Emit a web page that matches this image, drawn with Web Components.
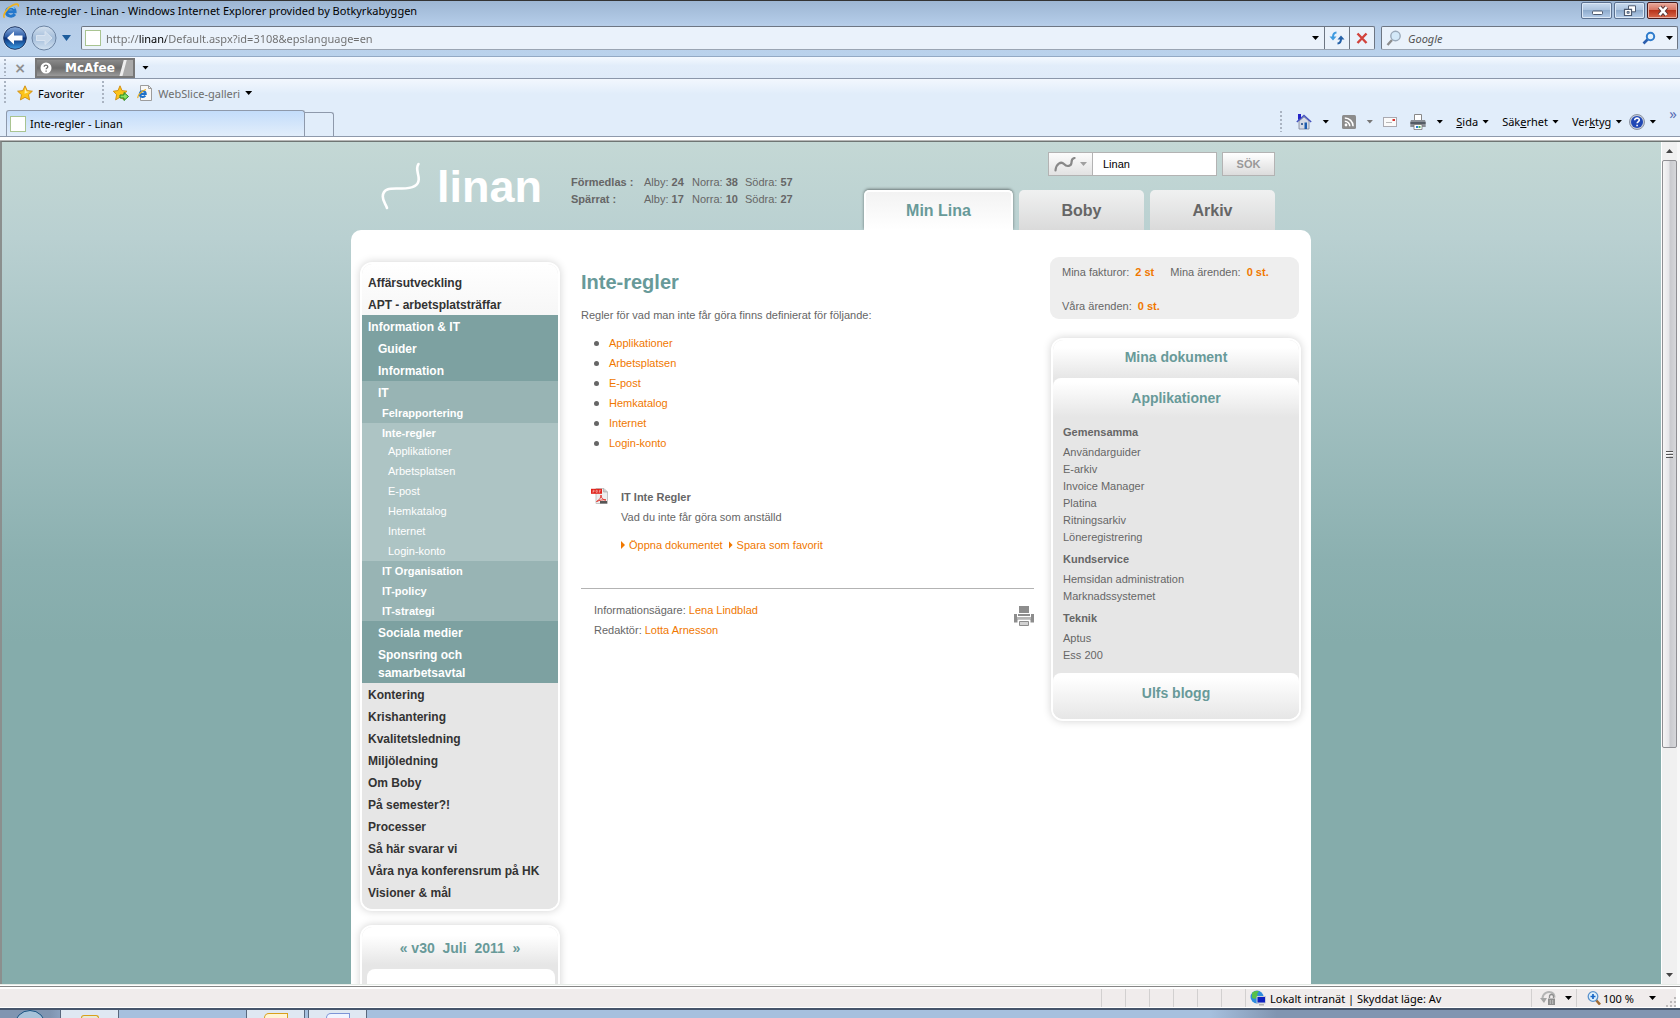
<!DOCTYPE html>
<html lang="sv">
<head>
<meta charset="utf-8">
<title>Inte-regler - Linan</title>
<style>
html,body{margin:0;height:100%}
body{font-family:"Liberation Sans",Arial,sans-serif;font-size:11px;color:#666;background:#fff;overflow:hidden}
</style>
</head>
<body>
<browser-window></browser-window>
<script>
const ICONS = {
  ie: '<svg viewBox="0 0 16 16"><path d="M3.500 8.800h8.600c0-5-7.700-5.200-8.600-.6-.8 5 5.600 6.600 8.400 2.800" fill="none" stroke="#2478cc" stroke-width="3"/><path d="M3.800 7c1.200-3.300 5.800-4 7.600-1.200" fill="none" stroke="#8fd4fb" stroke-width="1.200"/><path d="M1.500 14.800C-.8 12.500 4 4.500 10 2c3-1.300 6-1.500 5.200 1.500" fill="none" stroke="#f0b21c" stroke-width="1.600"/></svg>',
  back: '<svg viewBox="0 0 26 26"><defs><linearGradient id="b" x2="0" y2="1"><stop offset="0" stop-color="#8fb0dd"/><stop offset=".45" stop-color="#2a5aa5"/><stop offset=".5" stop-color="#0a2f78"/><stop offset="1" stop-color="#3ea0e8"/></linearGradient></defs><circle cx="13" cy="13" r="12.300" fill="#d3e1f1"/><circle cx="13" cy="13" r="11.300" fill="url(#b)" stroke="#1d3664" stroke-width="1"/><path d="M5 13l7-6.500v4h8.500v5H12v4z" fill="#fff"/></svg>',
  fwd: '<svg viewBox="0 0 26 26"><defs><linearGradient id="f" x2="0" y2="1"><stop offset="0" stop-color="#d5e2f0"/><stop offset=".5" stop-color="#a3bdda"/><stop offset="1" stop-color="#d4e3f2"/></linearGradient></defs><circle cx="13" cy="13" r="12" fill="url(#f)" stroke="#6c84a3"/><path d="M21 13l-7-6.500v4H5.500v5H14v4z" fill="#c9d9ea" stroke="#dfe9f4" stroke-width=".8"/></svg>',
  refresh: '<svg viewBox="0 0 16 16"><path d="M7.500 2.500C4.500 2.700 4 4.500 4 7" fill="none" stroke="#3f9be0" stroke-width="2"/><path d="M.5 6.500h7L4 10.500z" fill="#3f9be0"/><path d="M8.500 13.500c3-.2 3.500-2 3.500-4.500" fill="none" stroke="#2461a8" stroke-width="2"/><path d="M8.500 9.500h7L12 5.500z" fill="#2461a8"/></svg>',
  stop: '<svg viewBox="0 0 16 16"><path d="M3.500 3.500l9 9.500M12.500 3.500l-9 9.500" stroke="#d2433c" stroke-width="2.400"/></svg>',
  glass: '<svg viewBox="0 0 16 16"><path d="M6 10l-4.500 5" stroke="#8d8d8d" stroke-width="2.400"/><circle cx="9.500" cy="6" r="4.700" fill="#d4e9f9" stroke="#9aa9ba" stroke-width="1.400"/></svg>',
  go: '<svg viewBox="0 0 14 14"><path d="M6 8l-4.500 4.500" stroke="#2b5fae" stroke-width="2.600"/><circle cx="8.500" cy="5.500" r="3.700" fill="#e4f2fd" stroke="#2f7ccc" stroke-width="2"/></svg>',
  star: '<svg viewBox="0 0 16 16"><path d="M8 .8l2.200 4.800 5.200.6-3.900 3.500 1.100 5.200L8 12.300l-4.600 2.600 1.100-5.200L.6 6.200l5.200-.6z" fill="#fcc419" stroke="#cf8a10" stroke-width=".9"/><path d="M8 3l1.500 3.400 3 .4-5 2z" fill="#fff0a8"/></svg>',
  staradd: '<svg viewBox="0 0 16 16"><path d="M7 .8l2 4.800 5 .6-3.600 3.500 1 5.200L7 12.300l-4.400 2.600 1-5.200L.3 6.200l4.700-.6z" fill="#fcc419" stroke="#cf8a10" stroke-width=".9"/><path d="M7 10h4V7.500l4.500 4-4.500 4V13H7z" fill="#8be060" stroke="#238a24" stroke-width="1"/></svg>',
  slice: '<svg viewBox="0 0 16 16"><path d="M3.500.5h8l3 3v12h-11z" fill="#f7f7f7" stroke="#9c9c9c"/><path d="M11.500.5v3h3" fill="none" stroke="#9c9c9c"/><path d="M2.500 9h6.200c0-3.500-5.200-3.600-5.800-.4-.5 3.400 3.600 4.400 5.400 2" fill="none" stroke="#1f70c8" stroke-width="2.100"/><path d="M1 13c-1-2 3-7 8-8.500" fill="none" stroke="#edb120" stroke-width="1.200"/></svg>',
  home: '<svg viewBox="0 0 16 16"><path d="M3 7v8h10V7L8 3z" fill="#d6dbe6" stroke="#7b8397" stroke-width=".8"/><path d="M.8 8L8 1.500 15.200 8" fill="none" stroke="#4553bd" stroke-width="1.500"/><path d="M2 0h3v4L2 6z" fill="#2323c8"/><path d="M8.500 8.500H11V15H8.500z" fill="#1d5cae"/><path d="M5 9h2v2H5z" fill="#4a6c9e"/></svg>',
  rss: '<svg viewBox="0 0 14 14"><rect width="14" height="14" rx="1.500" fill="#8c8c8c"/><circle cx="4" cy="10" r="1.400" fill="#fff"/><path d="M2.800 6.200a5 5 0 015 5M2.800 3a8.300 8.300 0 018.300 8.200" fill="none" stroke="#fff" stroke-width="1.500"/></svg>',
  mail: '<svg viewBox="0 0 14 10"><rect x=".5" y=".5" width="13" height="9" fill="#fafafa" stroke="#a9a9b0"/><path d="M9.500 2h2.500v2H9.500z" fill="#d8342e"/><path d="M3 5.500h6" stroke="#b9b9b9"/></svg>',
  print: '<svg viewBox="0 0 16 16"><path d="M4.500.5h7V7h-7z" fill="#fff" stroke="#888"/><path d="M1 6h14l.7 2v5H.3V8z" fill="#8a8f96"/><path d="M.5 8h15v2H.5z" fill="#555c66"/><path d="M4 10.500h8v5H4z" fill="#fff" stroke="#777" stroke-width=".8"/><path d="M6 12h2v2H6z" fill="#2b7bd0"/><path d="M8.500 12h2v2h-2z" fill="#48b157"/></svg>',
  help: '<svg viewBox="0 0 16 16"><circle cx="8" cy="8" r="7.500" fill="#c3cbd9" stroke="#8b93a3"/><circle cx="8" cy="8" r="6" fill="#1f47b5"/><path d="M5.700 6.300c0-3 4.800-2.700 4.600-.2-.1 1.400-2.100 1.500-2.200 3.200M8.100 10.700v1.500" fill="none" stroke="#fff" stroke-width="1.600"/></svg>',
  globe: '<svg viewBox="0 0 16 16"><circle cx="7" cy="7" r="6.500" fill="#2f8bdd"/><path d="M2 3c2-2 5-2.500 7-1.500L7 4l1 2-3 3-3-1z" fill="#58c04a"/><path d="M7 6.500h8.500V13H7z" fill="#0f20c0" stroke="#c8ccd4"/><path d="M9 14h5v1.500H9z" fill="#b0b0b0"/></svg>',
  lock: '<svg viewBox="0 0 16 16"><path d="M2.500 8C3 3 8 1 11.500 2.500c2 1 3 2.500 3 5" fill="none" stroke="#b5b5b5" stroke-width="2"/><path d="M0 8l4 5 3-5z" fill="#a5a5a5"/><path d="M8 8.500h7V15H8z" fill="#8f8f8f"/><path d="M9.500 8V6.500a2 2 0 014 0V8" fill="none" stroke="#8f8f8f" stroke-width="1.300"/><path d="M10.300 10v4M12.700 10v4" stroke="#ccc" stroke-width=".8"/></svg>',
  zoom: '<svg viewBox="0 0 14 14"><path d="M9 9l4 4.500" stroke="#a06a32" stroke-width="2.600"/><circle cx="6" cy="5.500" r="4.800" fill="#dff0fc" stroke="#5a92cc" stroke-width="1.300"/><path d="M3.500 5.500h5M6 3v5" stroke="#1867c6" stroke-width="1.700"/></svg>',
  pdf: '<svg viewBox="0 0 17 16"><path d="M5 .5h8l3.500 3.500v11.500H5z" fill="#eee" stroke="#c4c4c4"/><path d="M12.500.5V4h4" fill="#ccc" stroke="#aaa" stroke-width=".7"/><path d="M0 .8h11v5H0z" fill="#e0231b"/><path d="M2 4.800V2.300h1.200v1.200H2M5 2.300v2h1.300v-2zM8.300 4.800V2.300h1.500M8.300 3.600h1" fill="none" stroke="#f6b5b0" stroke-width=".7"/><path d="M5.500 13.500c3-1.500 4.500-4 4.500-6.500 0 3 2 5 5 5-3-.5-6 0-9.500 1.500z" fill="none" stroke="#e02d25" stroke-width=".9"/><path d="M9 13h7v2.500H9z" fill="#555"/></svg>',
  printpage: '<svg viewBox="0 0 20 20"><path d="M5 0h10v7H5z" fill="#8d8d8d"/><path d="M0 8h3v3h14V8h3v8.500h-3.500v-3h-13v3H0z" fill="#8d8d8d"/><path d="M4 8h12v2H4z" fill="#8d8d8d"/><path d="M3 12h14" stroke="#b5b5b5" stroke-width="2"/><path d="M5.500 15.500h9v4h-9z" fill="#d2d2d2" stroke="#8d8d8d"/></svg>',
  line: '<svg viewBox="0 0 40 48"><path d="M37.500 2c-3.500 5 .5 9.500.2 15.500C37.400 25 29 26.500 21 26.500c-8 .5-19-2-19.200 8C1.700 39 4.500 41.500 6 46" fill="none" stroke="#fff" stroke-width="2.600" stroke-linecap="round"/></svg>',
  curve: '<svg viewBox="0 0 22 15"><path d="M1.500 13.500C2 7 7 4 10 7c3 3.500 7.500 2 7.500-1.500C17.500 3 18 1.500 20.500 1" fill="none" stroke="#888" stroke-width="2.200" stroke-linecap="round"/></svg>',
  min: '<svg viewBox="0 0 18 12"><rect x="4.500" y="6" width="10" height="3.500" rx="1" fill="#fff" stroke="#4d5a70"/></svg>',
  restore: '<svg viewBox="0 0 18 12"><path d="M7.500.8h7v6h-7z" fill="#fff" stroke="#4d5a70"/><path d="M3.500 4.300h7v6.200h-7z" fill="#fff" stroke="#4d5a70" stroke-width="1.200"/><path d="M6 6.500h2.200v1.800H6z" fill="#8fa9cb" stroke="#4d5a70" stroke-width=".8"/></svg>',
  close: '<svg viewBox="0 0 18 12"><path d="M5.500 2l7 8M12.500 2l-7 8" stroke="#5b3a3a" stroke-width="4.500"/><path d="M5.500 2l7 8M12.500 2l-7 8" stroke="#fff" stroke-width="2.600"/></svg>',
  query: '<svg viewBox="0 0 12 12"><circle cx="6" cy="6" r="5.500" fill="#fff"/><path d="M4.200 4.700c0-2.200 3.600-2 3.600.1C7.800 6 6.100 6 6.100 7.300M6.100 8.500v1.300" fill="none" stroke="#6e6e6e" stroke-width="1.300"/></svg>',
  size: '<svg viewBox="0 0 10 10"><path d="M8 0h2v2H8zM8 4h2v2H8zM4 4h2v2H4zM8 8h2v2H8zM4 8h2v2H4zM0 8h2v2H0z" fill="#bdbaba"/></svg>'
};

const RESET = `
*{box-sizing:border-box}
button,input{font:inherit;color:inherit;margin:0;padding:0;border:0;background:none;outline:0}
a{color:inherit;text-decoration:none}
ul{list-style:none;margin:0;padding:0}
p,h1,h2,h3{margin:0}
`;

function define(name, css, html, setup) {
  customElements.define(name, class extends HTMLElement {
    constructor() {
      super();
      const root = this.attachShadow({mode: 'open'});
      const t = document.createElement('template');
      t.innerHTML = `<style>${RESET}${css}</style>${html}`;
      root.append(t.content.cloneNode(true));
    }
    connectedCallback() { if (setup) setup(this, this.shadowRoot); }
  });
}

/* Small shared parts */
define('ui-icon', ':host{display:block;flex:none}svg{display:block;width:100%;height:100%}span{display:contents}', '<span></span>',
  (el, root) => {
    const s = Number(el.getAttribute('size') || 16);
    el.style.width = s + 'px';
    el.style.height = (el.getAttribute('tall') || s) + 'px';
    root.querySelector('span').innerHTML = ICONS[el.getAttribute('name')];
  });
define('drop-arrow', ':host{display:block;flex:none;width:7px;height:4px;background:var(--arrow,#000);clip-path:polygon(0 0,100% 0,50% 100%)}', '');
define('tool-grip', ':host{display:block;flex:none;width:2px;align-self:stretch;margin:2px 0;background:repeating-linear-gradient(#aab4c2 0 2px,transparent 2px 4px)}', '');

/* Browser chrome */
define('title-bar', `
:host{display:flex;align-items:center;height:24px;border-top:1px solid #333;padding:0 2px 4px 3px;gap:7px;color:#000;background:linear-gradient(#9db6d3,#b4cce8)}
.name{flex:1;white-space:nowrap}
.win{display:flex;gap:2px;align-self:flex-start;padding-top:1px}
.win button{width:31px;height:17px;display:grid;place-items:center;border:1px solid #5c7190;border-radius:2px;background:linear-gradient(#c9dbef,#a9c1dd 50%,#8faccd 50%,#b5cdea);box-shadow:inset 0 0 0 1px #dbe8f6}
.win .x{border-color:#471a1c;background:linear-gradient(#e9a99b,#d6705d 50%,#b8341c 50%,#d8694c);box-shadow:inset 0 0 0 1px #e9b0a3}
`, `<ui-icon name="ie"></ui-icon><span class="name">Inte-regler - Linan - Windows Internet Explorer provided by Botkyrkabyggen</span>
<div class="win"><button aria-label="Minimera"><ui-icon name="min" size="18" tall="12"></ui-icon></button><button aria-label="Återställ"><ui-icon name="restore" size="18" tall="12"></ui-icon></button><button class="x" aria-label="Stäng"><ui-icon name="close" size="18" tall="12"></ui-icon></button></div>`);

define('address-bar', `
:host{display:flex;align-items:flex-start;height:33px;padding:1px 2px 0 2px;background:linear-gradient(#b6cde8,#bad2ec);border-bottom:1px solid #93a9c4}
.nav{display:flex;align-items:center;gap:3px;padding-right:10px;height:26px}
.nav drop-arrow{width:9px;height:6px;margin-left:2px;--arrow:#1c5c9c}
.box{display:flex;align-items:stretch;height:24px;margin-top:1px;background:#eaf2fb;border:1px solid #6d7683;border-bottom-color:#9aa5b3;border-radius:2px}
.addr{flex:1;min-width:0;margin-right:6px}
.find{width:297px;align-items:center;padding:0 4px;gap:6px;font-style:italic;color:#555}
.find input{flex:1;min-width:0}
.find input::placeholder{color:#555;opacity:1}
.find drop-arrow{margin-left:4px}
.page{align-self:center;width:16px;height:16px;margin:0 5px 0 3px;background:#fff;border:1px solid #a9c491}
#url{flex:1;min-width:0;color:#6d6d6d;-webkit-text-fill-color:transparent;background:linear-gradient(90deg,#6d6d6d 33px,#000 33px 60px,#6d6d6d 60px);-webkit-background-clip:text;background-clip:text}
.more{padding:0 5px;display:grid;place-items:center}
.cell{width:25px;display:grid;place-items:center;border-left:1px solid #6d7683}
`, `<div class="nav"><button aria-label="Bakåt"><ui-icon name="back" size="26"></ui-icon></button><button aria-label="Framåt"><ui-icon name="fwd" size="26"></ui-icon></button><drop-arrow></drop-arrow></div>
<div class="box addr"><i class="page"></i><input id="url" aria-label="Adress" value="http://linan/Default.aspx?id=3108&amp;epslanguage=en"><button class="more" aria-label="Visa adresser"><drop-arrow></drop-arrow></button><button class="cell" aria-label="Uppdatera"><ui-icon name="refresh"></ui-icon></button><button class="cell" aria-label="Stoppa"><ui-icon name="stop"></ui-icon></button></div>
<div class="box find"><ui-icon name="glass"></ui-icon><input aria-label="Sök på webben" placeholder="Google"><button aria-label="Sök"><ui-icon name="go" size="14"></ui-icon></button><drop-arrow></drop-arrow></div>`);

define('mcafee-bar', `
:host{display:flex;align-items:center;height:22px;padding:0 4px;background:linear-gradient(#f4f9ff,#e2edfa 40%,#dfebf9);border-bottom:1px solid #8b97aa}
.x{width:16px;margin:0 7px 0 6px;font:bold 14px/16px "DejaVu Sans",sans-serif;color:#8f8f8f}
.brand{display:flex;align-items:center;gap:13px;width:100px;height:20px;padding-left:3px;margin-right:7px;border:2px solid #777;color:#fff;background:linear-gradient(105deg,transparent 86%,#eee 87% 89%,#aaa 90%),linear-gradient(#8a8a8a,#6c6c6c 50%,#9a9a9a)}
.brand span{font:bold 12px/14px "DejaVu Sans",sans-serif}
`, `<tool-grip></tool-grip><button class="x" aria-label="Stäng verktygsfält">×</button><button class="brand"><ui-icon name="query" size="12"></ui-icon><span>McAfee</span></button><drop-arrow></drop-arrow>`);

define('favorites-bar', `
:host{display:flex;align-items:center;height:30px;padding:0 4px 2px;color:#000;background:linear-gradient(#f2f7fe,#e1edfa 50%)}
button{display:flex;align-items:center;white-space:nowrap}
.fav{gap:5px;margin:0 18px 0 11px}
.add{margin:0 8px 0 9px}
.web{gap:5px;color:#6d6d6d}
`, `<tool-grip></tool-grip><button class="fav"><ui-icon name="star"></ui-icon>Favoriter</button><tool-grip></tool-grip><button class="add" aria-label="Lägg till"><ui-icon name="staradd"></ui-icon></button><button class="web"><ui-icon name="slice"></ui-icon>WebSlice-galleri<drop-arrow></drop-arrow></button>`);

define('tab-row', `
:host{display:flex;align-items:flex-end;height:28px;padding-left:6px;color:#000;background:#e1edfa;border-bottom:1px solid #8e99ab}
.tab{display:flex;align-items:center;gap:4px;width:299px;height:26px;padding-left:3px;border:1px solid #8e99ab;border-bottom:0;border-radius:3px 3px 0 0;background:linear-gradient(#c3dcfa,#e2eefb)}
.tab i{width:16px;height:16px;background:#fff;border:1px solid #a9c491}
.new{width:29px;height:24px;border:1px solid #8e99ab;border-left:0;border-bottom:0;border-radius:0 3px 0 0}
.tools{display:flex;align-items:center;gap:1px;align-self:stretch;margin-left:auto;padding:0 3px 2px 0}
.tools button{display:flex;align-items:center;gap:4px;padding:0 6px;white-space:nowrap}
.tools button.pic{gap:10px}
.tools button.home{padding-left:13px}
.tools button.post{padding-left:3px}
.tools button.last{padding:0}
.off{--arrow:#777}
.chev{align-self:flex-start;margin-left:12px;color:#5b6fb5;font-size:15px;line-height:9px}
`, `<button class="tab"><i></i>Inte-regler - Linan</button><button class="new" aria-label="Ny flik"></button>
<div class="tools"><tool-grip></tool-grip>
<button class="pic home" aria-label="Start"><ui-icon name="home"></ui-icon><drop-arrow></drop-arrow></button>
<button class="pic off" aria-label="Feeds"><ui-icon name="rss" size="14"></ui-icon><drop-arrow></drop-arrow></button>
<button class="post" aria-label="E-post"><ui-icon name="mail" size="14" tall="10"></ui-icon></button>
<button class="pic" aria-label="Skriv ut"><ui-icon name="print"></ui-icon><drop-arrow></drop-arrow></button>
<button><span><u>S</u>ida</span><drop-arrow></drop-arrow></button>
<button><span>Säk<u>e</u>rhet</span><drop-arrow></drop-arrow></button>
<button><span>Ver<u>k</u>tyg</span><drop-arrow></drop-arrow></button>
<button class="last" aria-label="Hjälp"><ui-icon name="help"></ui-icon><drop-arrow></drop-arrow></button>
<span class="chev">»</span></div>`);

define('scroll-bar', `
:host{display:flex;flex-direction:column;align-items:center;width:19px;flex:none;background:#f0f0f0;border-left:1px solid #fff;border-right:3px solid #f8f8f8}
drop-arrow{--arrow:#444;margin:7px 0}
.up{clip-path:polygon(50% 0,100% 100%,0 100%)}
.track{flex:1;width:100%;display:flex;flex-direction:column}
.thumb{flex:0 0 73%;display:grid;place-items:center;border:1px solid #8f8f93;border-radius:2px;background:linear-gradient(90deg,#f6f6f6,#e6e6e9 45%,#c9cace 55%,#d6d7da)}
.thumb i{width:7px;height:7px;background:repeating-linear-gradient(#555 0 1px,#fafafa 1px 2px,transparent 2px 3px)}
`, `<drop-arrow class="up"></drop-arrow><div class="track"><div class="thumb"><i></i></div></div><drop-arrow></drop-arrow>`);

define('status-bar', `
:host{display:block;color:#000}
.bar{display:flex;align-items:stretch;height:24px;border-top:1px solid #e5ebe6;box-shadow:inset 0 1px #fff,inset 0 2px #868686,inset 0 4px #fff;padding:4px 4px 1px 0;background:#f0ecec content-box}
.bar>*{border-left:1px solid #d2d0d0;display:flex;align-items:center;white-space:nowrap}
.fill{flex:1;border:0}
.cell{width:24px}
.zone{width:286px;gap:4px;padding-left:4px}
.lock{width:45px;gap:9px;padding-left:8px}
.zoom{width:80px;gap:2px;padding-left:10px}
.zoom drop-arrow{margin-left:auto}
.bar .size{width:20px;border:0;align-items:flex-end;justify-content:flex-end}
.task{display:flex;height:10px;border-top:2px solid #46556b;background:linear-gradient(90deg,#8095b1 3%,#a6c0de 5% 72%,#8195b1 76%)}
.orb{width:60px;display:flex;justify-content:center;overflow:hidden}
.orb i{flex:none;width:32px;height:32px;border-radius:50%;border:1px solid #155080;background:#a7c2d9}
.app{width:59px;background:#dfe8f2;border:1px solid #59687d;border-width:0 1px;display:flex;justify-content:center;align-items:flex-end}
.app i{width:24px;height:5px;border:1px solid #d9a01b;border-bottom:0;border-radius:8px 0 0;background:#fff4d4}
.app.w i{border-color:#7d94d6;background:#f0f4ff}
.app.f i{width:18px;height:3px;border-radius:8px 8px 0 0;background:#e6e9d8}
.gap{flex:0 0 127px}.gap.s{flex-basis:3px}
`, `<div class="bar"><span class="fill"></span><span class="cell"></span><span class="cell"></span><span class="cell"></span><span class="cell"></span><span class="cell"></span><span class="cell"></span>
<div class="zone"><ui-icon name="globe"></ui-icon>Lokalt intranät | Skyddat läge: Av</div>
<button class="lock" aria-label="Skyddat läge"><ui-icon name="lock"></ui-icon><drop-arrow></drop-arrow></button>
<button class="zoom"><ui-icon name="zoom" size="14"></ui-icon>100 %<drop-arrow></drop-arrow></button><span class="size"><ui-icon name="size" size="10"></ui-icon></span></div>
<div class="task"><span class="orb"><i></i></span><span class="app f"><i></i></span><span class="gap"></span><span class="app"><i></i></span><span class="gap s"></span><span class="app w"><i></i></span></div>`);

/* Intranet page */
define('site-header', `
:host{display:flex;height:88px;padding:0 36px 0 30px}
.logo{display:flex;gap:16px;width:190px;padding-top:20px;color:#fff;font:bold 45px/50px "Liberation Sans",Arial,sans-serif}
.stats{display:grid;grid-template-columns:73px 48px 53px auto;align-content:start;padding-top:32px;line-height:17px;white-space:nowrap}
.right{margin-left:auto;display:flex;flex-direction:column;justify-content:space-between;align-items:flex-end;padding-top:10px}
form{display:flex;gap:5px;height:24px}
.field{display:flex;border:1px solid #b3b3b3;background:#fff}
.pick{display:flex;align-items:center;justify-content:center;gap:4px;width:44px;border-right:1px solid #b3b3b3;background:linear-gradient(#fcfcfc,#e2e2e2);--arrow:#a0a0a0}
.field input{width:123px;padding:0 10px;color:#000}
.go{width:53px;border:1px solid #b3b3b3;background:linear-gradient(#fff,#dcdcdc);color:#999;font-weight:bold}
nav{display:flex;align-items:flex-end;gap:6px;font:bold 16px/42px "Liberation Sans",Arial,sans-serif}
nav a{width:125px;height:40px;text-align:center;border-radius:5px 5px 0 0;background:linear-gradient(#f0f1f1,#dadada);color:#666}
nav a.on{width:149px;border:2px solid #fff;border-bottom:0;background:linear-gradient(#f3f3f3,#fff);line-height:38px;color:#689a99;box-shadow:0 -1px 3px rgba(0,0,0,.45);clip-path:inset(-5px -5px 0 -5px)}
`, `<div class="logo"><ui-icon name="line" size="40" tall="48"></ui-icon><span>linan</span></div>
<div class="stats"><b>Förmedlas :</b><span>Alby: <b>24</b></span><span>Norra: <b>38</b></span><span>Södra: <b>57</b></span>
<b>Spärrat :</b><span>Alby: <b>17</b></span><span>Norra: <b>10</b></span><span>Södra: <b>27</b></span></div>
<div class="right"><form><div class="field"><button type="button" class="pick" aria-label="Välj sökområde"><ui-icon name="curve" size="22" tall="15"></ui-icon><drop-arrow></drop-arrow></button><input aria-label="Sök" value="Linan"></div><button type="button" class="go">SÖK</button></form>
<nav><a class="on" href="#">Min Lina</a><a href="#">Boby</a><a href="#">Arkiv</a></nav></div>`);

define('soft-card', `
:host{display:block;border:2px solid #fff;border-radius:12px;overflow:hidden;box-shadow:0 0 8px rgba(0,0,0,.18);background:#e6e6e6}
`, '<slot></slot>');

define('side-menu', `
:host{display:block}
nav{padding:7px 0 6px;background:linear-gradient(#fff,#e6e6e6 150px);font-weight:bold;font-size:12px;line-height:18px;color:#333}
a{display:block;padding:3px 6px 1px}
.l1 a{padding-left:16px}
.open,.open .l1{background:#7da1a1;color:#fff}
.l1 .open{background:#98b4b4}
.l2 .open{background:#adc4c4}
.l2{font-size:11px;line-height:20px}
.l2 a{padding:0 20px}
.l3{font-weight:normal;margin-top:-2px}
.l3 a{padding:0 26px}
`, '<nav></nav>', (el, root) => {
  const tree = ['Affärsutveckling', 'APT - arbetsplatsträffar',
    ['Information & IT', 'Guider', 'Information',
      ['IT', 'Felrapportering',
        ['Inte-regler', 'Applikationer', 'Arbetsplatsen', 'E-post', 'Hemkatalog', 'Internet', 'Login-konto'],
        'IT Organisation', 'IT-policy', 'IT-strategi'],
      'Sociala medier', 'Sponsring och\nsamarbetsavtal'],
    'Kontering', 'Krishantering', 'Kvalitetsledning', 'Miljöledning', 'Om Boby', 'På semester?!',
    'Processer', 'Så här svarar vi', 'Våra nya konferensrum på HK', 'Visioner & mål'];
  const esc = s => s.replace(/&/g, '&amp;').replace('\n', '<br>');
  const list = (items, depth) => `<ul class="l${depth}">` + items.map(i => Array.isArray(i)
    ? `<li class="open"><a href="#">${esc(i[0])}</a>${list(i.slice(1), depth + 1)}</li>`
    : `<li><a href="#">${esc(i)}</a></li>`).join('') + '</ul>';
  root.querySelector('nav').innerHTML = list(tree, 0);
});

define('mini-calendar', `
:host{display:block}
div{padding:12px 0;height:42px;text-align:center;font:bold 14px/18px "Liberation Sans",Arial,sans-serif;color:#689a99;background:linear-gradient(#fff 20%,#e6e6e6 90%);white-space:pre}
section{height:150px;margin:0 3px 0 5px;border-radius:8px;background:#fff}
`, '<div><a href="#">«</a> v30  Juli  2011  <a href="#">»</a></div><section></section>');

define('page-article', `
:host{display:block;padding:9px 16px 0 21px;line-height:20px}
h1{font-size:20px;line-height:32px;color:#689a99}
a{color:#f07800}
.intro{margin-top:7px}
.list{margin-top:8px}
.list li{display:flex;align-items:center;padding-left:13px;gap:10px}
.list li::before{content:"";width:5px;height:5px;border-radius:50%;background:#666}
.doc{display:flex;gap:13px;margin-top:34px;padding-left:10px}
.doc ui-icon{margin-top:1px}
.acts{display:flex;gap:6px;margin-top:8px}
.acts a{display:flex;align-items:center;gap:4px}
.acts a::before{content:"";width:4px;height:8px;background:#f07800;clip-path:polygon(0 0,100% 50%,0 100%)}
footer{display:flex;justify-content:space-between;margin-top:33px;padding:11px 0 0 13px;border-top:1px solid #b3b3b3}
footer button{align-self:flex-start;padding-top:6px}
`, `<h1>Inte-regler</h1><p class="intro">Regler för vad man inte får göra finns definierat för följande:</p>
<ul class="list"><li><a href="#">Applikationer</a></li><li><a href="#">Arbetsplatsen</a></li><li><a href="#">E-post</a></li><li><a href="#">Hemkatalog</a></li><li><a href="#">Internet</a></li><li><a href="#">Login-konto</a></li></ul>
<div class="doc"><ui-icon name="pdf" size="17" tall="16"></ui-icon><div><b>IT Inte Regler</b><p>Vad du inte får göra som anställd</p><div class="acts"><a href="#">Öppna dokumentet</a><a href="#">Spara som favorit</a></div></div></div>
<footer><div><p>Informationsägare: <a href="#">Lena Lindblad</a></p><p>Redaktör: <a href="#">Lotta Arnesson</a></p></div><button aria-label="Skriv ut"><ui-icon name="printpage" size="20"></ui-icon></button></footer>`);

define('my-numbers', `
:host{display:flex;flex-wrap:wrap;gap:17px 16px;margin-right:2px;padding:7px 12px 4px;border-radius:9px;background:#eee;line-height:17px}
b{color:#f07800;padding-left:3px}
`, '<span>Mina fakturor: <b>2 st</b></span><span>Mina ärenden: <b>0 st.</b></span><span>Våra ärenden: <b>0 st.</b></span>');

define('side-panels', `
:host{display:block}
h2{font-size:14px;line-height:18px;text-align:center;color:#689a99;padding:11px 0 10px;border-radius:8px 8px 0 0;background:linear-gradient(#fff 10%,#e6e6e6)}
h2.first{padding:8px 0 12px;background:linear-gradient(#fff 20%,#e6e6e6)}
h2.last{padding-bottom:17px}
.apps{padding:5px 10px 6px;line-height:17px}
h3{font-size:11px;line-height:17px;padding:2px 0 3px}
ul{margin-bottom:3px}
`, `<h2 class="first">Mina dokument</h2><h2>Applikationer</h2>
<div class="apps"><h3>Gemensamma</h3><ul><li><a href="#">Användarguider</a></li><li><a href="#">E-arkiv</a></li><li><a href="#">Invoice Manager</a></li><li><a href="#">Platina</a></li><li><a href="#">Ritningsarkiv</a></li><li><a href="#">Löneregistrering</a></li></ul>
<h3>Kundservice</h3><ul><li><a href="#">Hemsidan administration</a></li><li><a href="#">Marknadssystemet</a></li></ul>
<h3>Teknik</h3><ul><li><a href="#">Aptus</a></li><li><a href="#">Ess 200</a></li></ul></div>
<h2 class="last">Ulfs blogg</h2>`);

define('site-page', `
:host{display:block;flex:1;min-width:0;overflow:hidden;padding-right:1px;background:linear-gradient(#c4d8d5,#b9d0d1 96px,#8bb0b0 420px,#85acab 500px)}
.wrap{max-width:960px;margin:0 auto}
.sheet{display:grid;grid-template-columns:200px 1fr 251px;min-height:900px;padding:27px 10px 0 9px;border-radius:10px 10px 0 0;background:#fff}
.left{padding-top:5px;display:grid;gap:14px;align-content:start}
.rightcol{display:grid;gap:19px;align-content:start}
.rightcol soft-card{margin-left:1px}
`, `<div class="wrap"><site-header></site-header><div class="sheet">
<div class="left"><soft-card><side-menu></side-menu></soft-card><soft-card><mini-calendar></mini-calendar></soft-card></div>
<page-article></page-article>
<div class="rightcol"><my-numbers></my-numbers><soft-card><side-panels></side-panels></soft-card></div>
</div></div>`);

define('browser-window', `
:host{display:flex;flex-direction:column;height:100vh}
.chrome{font-family:"Noto Sans","Open Sans",sans-serif;font-size:11px;flex:none}
.view{flex:1;min-height:0;display:flex;border:solid #6f7573;border-width:1px 0 0 2px;border-left-color:#8b8f8e;box-shadow:0 -1px #b7b7b7;margin-top:4px}
`, `<div class="chrome"><title-bar></title-bar><address-bar></address-bar><mcafee-bar></mcafee-bar><favorites-bar></favorites-bar><tab-row></tab-row></div>
<div class="view"><site-page></site-page><scroll-bar></scroll-bar></div>
<div class="chrome"><status-bar></status-bar></div>`);
</script>
</body>
</html>
